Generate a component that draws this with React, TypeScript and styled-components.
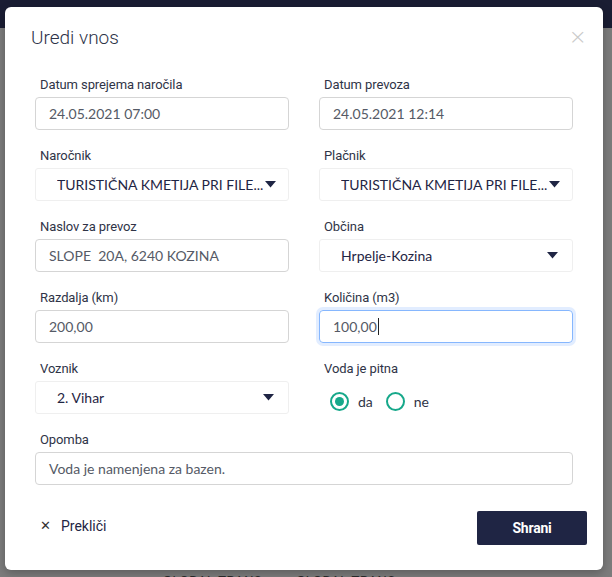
import React from "react";
import styled, { createGlobalStyle } from "styled-components";

const Global = createGlobalStyle`
  html, body { margin: 0; padding: 0; }
  body { width: 612px; height: 577px; overflow: hidden; font-family: "Lato", "Open Sans", sans-serif; }
  * { box-sizing: border-box; }
`;

const Page = styled.div`
  width: 612px;
  height: 577px;
  background: #7c7c7c;
  display: flex;
  flex-direction: column;
  position: relative;
  overflow: hidden;
`;

const HeaderBar = styled.div`
  height: 28px;
  background: #1a1d33;
  flex-shrink: 0;
`;

const BgContent = styled.div`
  flex: 1;
  display: flex;
  align-items: flex-end;
  padding: 0 0 0 163px;
  gap: 34px;
  color: #2a2a2a;
  font-family: "Roboto", sans-serif;
  font-size: 13px;
`;

const BgText = styled.span`
  margin-bottom: -11px;
  letter-spacing: 0.6px;
`;

const Overlay = styled.div`
  position: absolute;
  inset: 0;
  padding: 7px 9px 0 5px;
`;

const Modal = styled.div`
  background: #fff;
  border-radius: 6px;
  width: 598px;
  height: 563px;
  display: flex;
  flex-direction: column;
  box-shadow: 0 3px 10px rgba(0, 0, 0, 0.25);
`;

const ModalHeader = styled.div`
  display: flex;
  justify-content: space-between;
  align-items: center;
  padding: 0 16px 0 26px;
  height: 62px;
`;

const Title = styled.h2`
  margin: 0 0 1px 0;
  font-family: "Roboto", sans-serif;
  font-weight: 300;
  font-size: 19px;
  color: #2d3248;
  letter-spacing: 0px;
`;

const Close = styled.span`
  color: #c9c9c9;
  font-size: 22px;
  font-weight: 300;
  font-family: "DejaVu Sans", sans-serif;
  line-height: 1;
  margin-top: -2px;
`;

const Body = styled.div`
  padding: 8px 30px 0 30px;
  display: grid;
  grid-template-columns: minmax(0, 1fr) minmax(0, 1fr);
  column-gap: 30px;
  row-gap: 18px;
`;

const Field = styled.div<{ $full?: boolean }>`
  display: flex;
  flex-direction: column;
  min-width: 0;
  grid-column: ${(p) => (p.$full ? "1 / span 2" : "auto")};
`;

const Label = styled.label`
  font-family: "Roboto", sans-serif;
  font-size: 13px;
  color: #2f3447;
  padding-left: 5px;
  height: 20px;
  line-height: 16px;
  letter-spacing: -0.1px;
`;

const Input = styled.div<{ $focus?: boolean }>`
  height: 33px;
  border: 1px solid ${(p) => (p.$focus ? "#86b7fe" : "#d5d5d5")};
  border-radius: 4px;
  box-shadow: ${(p) => (p.$focus ? "0 0 0 3px rgba(13, 110, 253, 0.12)" : "none")};
  display: flex;
  align-items: center;
  padding-left: 13px;
  font-size: 14px;
  color: #555a66;
`;

const Caret = styled.span`
  display: inline-block;
  width: 1px;
  height: 17px;
  background: #222;
  margin-left: 1px;
`;

const Select = styled.div<{ $wide?: boolean }>`
  height: 33px;
  border: 1px solid #efefef;
  border-radius: 3px;
  display: flex;
  align-items: center;
  padding: 0 ${(p) => (p.$wide ? "14px" : "12px")} 0 21px;
  font-size: 14px;
  color: #1f2544;
  gap: 2px;
  min-width: 0;
`;

const SelectText = styled.span<{ $grow?: boolean }>`
  flex: ${(p) => (p.$grow ? "1" : "0 1 auto")};
  white-space: nowrap;
  overflow: hidden;
  min-width: 0;
`;

const Arrow = () => (
  <svg width="11" height="7" viewBox="0 0 11 7" style={{ flexShrink: 0 }}>
    <path d="M0 0 L11 0 L5.5 6.5 Z" fill="#1f2544" />
  </svg>
);

const RadioRow = styled.div`
  height: 33px;
  display: flex;
  align-items: center;
  padding: 7px 0 0 11px;
  gap: 9px;
  font-size: 14px;
  color: #2f3447;
`;

const RadioItem = styled.span`
  display: flex;
  align-items: center;
  gap: 9px;
  margin-right: 4px;
`;

const RadioCircle = styled.span<{ $checked?: boolean }>`
  width: 19px;
  height: 19px;
  border-radius: 50%;
  border: 2px solid #16a88a;
  display: flex;
  align-items: center;
  justify-content: center;
  &::after {
    content: "";
    width: 9px;
    height: 9px;
    border-radius: 50%;
    background: ${(p) => (p.$checked ? "#16a88a" : "transparent")};
  }
`;

const Footer = styled.div`
  margin-top: auto;
  display: flex;
  justify-content: space-between;
  align-items: center;
  padding: 0 16px 25px 35px;
`;

const Cancel = styled.span`
  display: flex;
  align-items: center;
  gap: 10px;
  font-family: "Roboto", sans-serif;
  font-size: 14px;
  color: #1f2544;
  margin-top: -5px;
`;

const CancelX = styled.span`
  font-size: 13px;
  color: #333;
`;

const SaveButton = styled.button`
  width: 110px;
  height: 34px;
  background: #1f2544;
  color: #fff;
  border: none;
  border-radius: 2px;
  font-family: "Roboto", sans-serif;
  font-weight: 700;
  font-size: 14px;
  letter-spacing: -0.2px;
`;

export default function App() {
  return (
    <>
      <Global />
      <Page>
        <HeaderBar />
        <BgContent>
          <BgText>GLOBAL TRANS</BgText>
          <BgText>GLOBAL TRANS</BgText>
        </BgContent>
        <Overlay>
          <Modal>
            <ModalHeader>
              <Title>Uredi vnos</Title>
              <Close>×</Close>
            </ModalHeader>
            <Body>
              <Field>
                <Label>Datum sprejema naročila</Label>
                <Input>24.05.2021 07:00</Input>
              </Field>
              <Field>
                <Label>Datum prevoza</Label>
                <Input>24.05.2021 12:14</Input>
              </Field>
              <Field>
                <Label>Naročnik</Label>
                <Select>
                  <SelectText>TURISTIČNA KMETIJA PRI FILE...</SelectText>
                  <Arrow />
                </Select>
              </Field>
              <Field>
                <Label>Plačnik</Label>
                <Select>
                  <SelectText>TURISTIČNA KMETIJA PRI FILE...</SelectText>
                  <Arrow />
                </Select>
              </Field>
              <Field>
                <Label>Naslov za prevoz</Label>
                <Input>SLOPE&nbsp; 20A, 6240 KOZINA</Input>
              </Field>
              <Field>
                <Label>Občina</Label>
                <Select $wide>
                  <SelectText $grow>Hrpelje-Kozina</SelectText>
                  <Arrow />
                </Select>
              </Field>
              <Field>
                <Label>Razdalja (km)</Label>
                <Input>200,00</Input>
              </Field>
              <Field>
                <Label>Količina (m3)</Label>
                <Input $focus>
                  100,00
                  <Caret />
                </Input>
              </Field>
              <Field>
                <Label>Voznik</Label>
                <Select $wide>
                  <SelectText $grow>2. Vihar</SelectText>
                  <Arrow />
                </Select>
              </Field>
              <Field>
                <Label>Voda je pitna</Label>
                <RadioRow>
                  <RadioItem>
                    <RadioCircle $checked />
                    da
                  </RadioItem>
                  <RadioItem>
                    <RadioCircle />
                    ne
                  </RadioItem>
                </RadioRow>
              </Field>
              <Field $full>
                <Label>Opomba</Label>
                <Input>Voda je namenjena za bazen.</Input>
              </Field>
            </Body>
            <Footer>
              <Cancel>
                <CancelX>✕</CancelX>
                Prekliči
              </Cancel>
              <SaveButton>Shrani</SaveButton>
            </Footer>
          </Modal>
        </Overlay>
      </Page>
    </>
  );
}
